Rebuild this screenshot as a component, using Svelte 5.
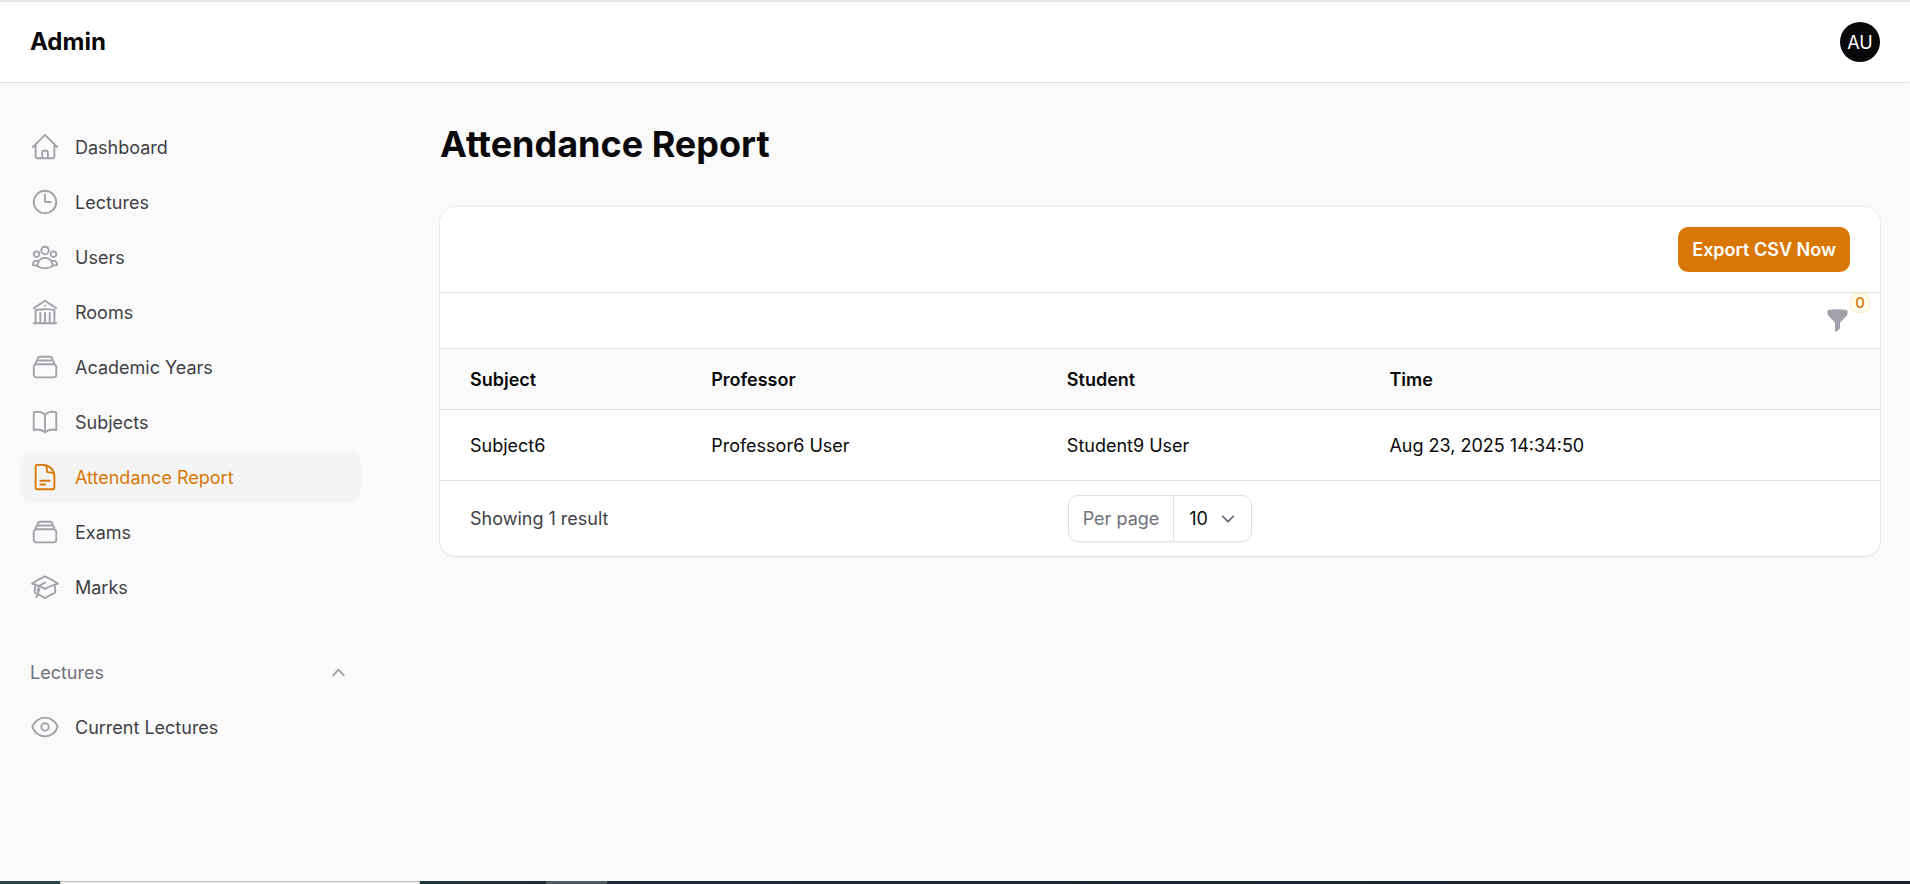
<script>
  const nav = [
    {
      label: "Dashboard",
      icon: "m2.25 12 8.954-8.955c.44-.439 1.152-.439 1.591 0L21.75 12M4.5 9.75v10.125c0 .621.504 1.125 1.125 1.125H9.75v-4.875c0-.621.504-1.125 1.125-1.125h2.25c.621 0 1.125.504 1.125 1.125V21h4.125c.621 0 1.125-.504 1.125-1.125V9.75M8.25 21h8.25",
    },
    {
      label: "Lectures",
      icon: "M12 6v6h4.5m4.5 0a9 9 0 1 1-18 0 9 9 0 0 1 18 0Z",
    },
    {
      label: "Users",
      icon: "M18 18.72a9.094 9.094 0 0 0 3.741-.479 3 3 0 0 0-4.682-2.72m.94 3.198.001.031c0 .225-.012.447-.037.666A11.944 11.944 0 0 1 12 21c-2.17 0-4.207-.576-5.963-1.584A6.062 6.062 0 0 1 6 18.719m12 0a5.971 5.971 0 0 0-.941-3.197m0 0A5.995 5.995 0 0 0 12 12.75a5.995 5.995 0 0 0-5.058 2.772m0 0a3 3 0 0 0-4.681 2.72 8.986 8.986 0 0 0 3.74.477m.94-3.197a5.971 5.971 0 0 0-.94 3.197M15 6.75a3 3 0 1 1-6 0 3 3 0 0 1 6 0Zm6 3a2.25 2.25 0 1 1-4.5 0 2.25 2.25 0 0 1 4.5 0Zm-13.5 0a2.25 2.25 0 1 1-4.5 0 2.25 2.25 0 0 1 4.5 0Z",
    },
    {
      label: "Rooms",
      icon: "M12 21v-8.25M15.75 21v-8.25M8.25 21v-8.25M3 9l9-6 9 6m-1.5 12V10.332A48.36 48.36 0 0 0 12 9.75c-2.551 0-5.056.2-7.5.582V21M3 21h18M12 6.75h.008v.008H12V6.75Z",
    },
    {
      label: "Academic Years",
      icon: "M6 6.878V6a2.25 2.25 0 0 1 2.25-2.25h7.5A2.25 2.25 0 0 1 18 6v.878m-12 0c.235-.083.487-.128.75-.128h10.5c.263 0 .515.045.75.128m-12 0A2.25 2.25 0 0 0 4.5 9v.878m13.5-3A2.25 2.25 0 0 1 19.5 9v.878m0 0a2.246 2.246 0 0 0-.75-.128H5.25c-.263 0-.515.045-.75.128m15 0A2.25 2.25 0 0 1 21 12v6a2.25 2.25 0 0 1-2.25 2.25H5.25A2.25 2.25 0 0 1 3 18v-6c0-.98.626-1.813 1.5-2.122",
    },
    {
      label: "Subjects",
      icon: "M12 6.042A8.967 8.967 0 0 0 6 3.75c-1.052 0-2.062.18-3 .512v14.25A8.987 8.987 0 0 1 6 18c2.305 0 4.408.867 6 2.292m0-14.25a8.966 8.966 0 0 1 6-2.292c1.052 0 2.062.18 3 .512v14.25A8.987 8.987 0 0 0 18 18a8.967 8.967 0 0 0-6 2.292m0-14.25v14.25",
    },
    {
      label: "Attendance Report",
      active: true,
      icon: "M19.5 14.25v-2.625a3.375 3.375 0 0 0-3.375-3.375h-1.5A1.125 1.125 0 0 1 13.5 7.125v-1.5a3.375 3.375 0 0 0-3.375-3.375H8.25m0 12.75h7.5m-7.5 3H12M10.5 2.25H5.625c-.621 0-1.125.504-1.125 1.125v17.25c0 .621.504 1.125 1.125 1.125h12.75c.621 0 1.125-.504 1.125-1.125V11.25a9 9 0 0 0-9-9Z",
    },
    {
      label: "Exams",
      icon: "M6 6.878V6a2.25 2.25 0 0 1 2.25-2.25h7.5A2.25 2.25 0 0 1 18 6v.878m-12 0c.235-.083.487-.128.75-.128h10.5c.263 0 .515.045.75.128m-12 0A2.25 2.25 0 0 0 4.5 9v.878m13.5-3A2.25 2.25 0 0 1 19.5 9v.878m0 0a2.246 2.246 0 0 0-.75-.128H5.25c-.263 0-.515.045-.75.128m15 0A2.25 2.25 0 0 1 21 12v6a2.25 2.25 0 0 1-2.25 2.25H5.25A2.25 2.25 0 0 1 3 18v-6c0-.98.626-1.813 1.5-2.122",
    },
    {
      label: "Marks",
      icon: "M4.26 10.147a60.438 60.438 0 0 0-.491 6.347A48.62 48.62 0 0 1 12 20.904a48.62 48.62 0 0 1 8.232-4.41 60.46 60.46 0 0 0-.491-6.347m-15.482 0a50.636 50.636 0 0 0-2.658-.813A59.906 59.906 0 0 1 12 3.493a59.903 59.903 0 0 1 10.399 5.84c-.896.248-1.783.52-2.658.814m-15.482 0A50.717 50.717 0 0 1 12 13.489a50.702 50.702 0 0 1 7.74-3.342M6.75 15a.75.75 0 1 0 0-1.5.75.75 0 0 0 0 1.5Zm0 0v-3.675A55.378 55.378 0 0 1 12 8.443m-7.007 11.55A5.981 5.981 0 0 0 6.75 15.75v-1.5",
    },
  ];

  const lectureNav = [
    {
      label: "Current Lectures",
      icon: "M2.036 12.322a1.012 1.012 0 0 1 0-.639C3.423 7.51 7.36 4.5 12 4.5c4.638 0 8.573 3.007 9.963 7.178.07.207.07.431 0 .639C20.577 16.49 16.64 19.5 12 19.5c-4.638 0-8.573-3.007-9.963-7.178ZM15 12a3 3 0 1 1-6 0 3 3 0 0 1 6 0Z",
    },
  ];

  const rows = [
    {
      subject: "Subject6",
      professor: "Professor6 User",
      student: "Student9 User",
      time: "Aug 23, 2025 14:34:50",
    },
  ];

  let open = $state(true);
  let perPage = $state("10");
</script>

{#snippet navItem(item)}
  <li>
    <a href="#top" class="item" class:active={item.active}>
      <svg class="icon" viewBox="0 0 24 24" aria-hidden="true">
        <path d={item.icon} />
      </svg>
      <span>{item.label}</span>
    </a>
  </li>
{/snippet}

<div class="page" id="top">
  <header class="topbar">
    <a href="#top" class="brand">Admin</a>
    <button class="avatar" aria-label="User menu">AU</button>
  </header>

  <div class="body">
    <nav class="sidebar">
      <ul>
        {#each nav as item}
          {@render navItem(item)}
        {/each}
      </ul>

      <div class="group">
        <button
          class="group-button"
          aria-expanded={open}
          onclick={() => (open = !open)}
        >
          <span>Lectures</span>
          <svg class:closed={!open} viewBox="0 0 20 20" aria-hidden="true">
            <path
              d="M14.77 12.79a.75.75 0 0 1-1.06-.02L10 8.832 6.29 12.77a.75.75 0 1 1-1.08-1.04l4.25-4.5a.75.75 0 0 1 1.08 0l4.25 4.5a.75.75 0 0 1-.02 1.06Z"
            />
          </svg>
        </button>
        {#if open}
          <ul>
            {#each lectureNav as item}
              {@render navItem(item)}
            {/each}
          </ul>
        {/if}
      </div>
    </nav>

    <main>
      <h1>Attendance Report</h1>

      <section class="card">
        <div class="actions">
          <button class="export">Export CSV Now</button>
        </div>

        <div class="toolbar">
          <button class="filter" aria-label="Filter">
            <svg viewBox="0 0 20 20" aria-hidden="true">
              <path
                d="M2.628 1.601C5.028 1.206 7.49 1 10 1s4.973.206 7.372.601a.75.75 0 0 1 .628.74v2.288a2.25 2.25 0 0 1-.659 1.59l-4.682 4.683a2.25 2.25 0 0 0-.659 1.59v3.037c0 .684-.31 1.33-.844 1.757l-1.937 1.55A.75.75 0 0 1 8 18.25v-5.757a2.25 2.25 0 0 0-.659-1.591L2.659 6.22A2.25 2.25 0 0 1 2 4.629V2.34a.75.75 0 0 1 .628-.74Z"
              />
            </svg>
            <span class="badge">0</span>
          </button>
        </div>

        <table>
          <colgroup>
            <col class="col-subject" />
            <col class="col-professor" />
            <col class="col-student" />
            <col />
          </colgroup>
          <thead>
            <tr>
              <th>Subject</th>
              <th>Professor</th>
              <th>Student</th>
              <th>Time</th>
            </tr>
          </thead>
          <tbody>
            {#each rows as row}
              <tr>
                <td>{row.subject}</td>
                <td>{row.professor}</td>
                <td>{row.student}</td>
                <td>{row.time}</td>
              </tr>
            {/each}
          </tbody>
        </table>

        <div class="pagination">
          <span class="count">Showing {rows.length} result</span>
          <div class="per-page">
            <label for="per-page">Per page</label>
            <div class="select">
              <select id="per-page" bind:value={perPage}>
                <option>5</option>
                <option>10</option>
                <option>25</option>
                <option>50</option>
              </select>
              <svg viewBox="0 0 20 20" aria-hidden="true">
                <path d="m6 8 4 4 4-4" />
              </svg>
            </div>
          </div>
        </div>
      </section>
    </main>
  </div>

  <div class="taskbar" aria-hidden="true">
    <div class="start"></div>
    <div class="search"></div>
    <div class="apps"></div>
    <div class="current"></div>
    <div class="rest"></div>
  </div>
</div>

<style>
  :global(body) {
    background: #fafafa;
  }
  .page {
    min-height: 100vh;
    display: flex;
    flex-direction: column;
    box-sizing: border-box;
    font-family: Inter, "Liberation Sans", sans-serif;
    font-size: 18px;
    line-height: 25px;
    color: #09090b;
  }
  button,
  select {
    font: inherit;
    color: inherit;
    border: 0;
    padding: 0;
    background: none;
    cursor: pointer;
  }
  a {
    color: inherit;
    text-decoration: none;
  }
  ul {
    list-style: none;
    margin: 0;
    padding: 0;
    display: flex;
    flex-direction: column;
    gap: 5px;
  }

  .topbar {
    display: flex;
    align-items: center;
    justify-content: space-between;
    height: 80px;
    margin-top: 1px;
    padding: 0 30px;
    background: white;
    border-top: 1px solid #e6dfe9;
    box-shadow:
      0 0 0 1px rgba(9, 9, 11, 0.05),
      0 1px 2px rgba(0, 0, 0, 0.06);
  }
  .brand {
    font-size: 24px;
    font-weight: 700;
    line-height: 30px;
  }
  .avatar {
    width: 40px;
    height: 40px;
    border-radius: 50%;
    background: #09090b;
    color: white;
  }

  .body {
    flex: 1;
    display: flex;
  }
  .sidebar {
    width: 341px;
    flex: none;
    padding: 40px 39px 40px 20px;
    display: flex;
    flex-direction: column;
    gap: 35px;
  }
  .item {
    display: flex;
    align-items: center;
    gap: 15px;
    padding: 10px;
    height: 30px;
    border-radius: 10px;
    color: #3f3f46;
  }
  .icon {
    width: 30px;
    height: 30px;
    fill: none;
    stroke: #a1a1aa;
    stroke-width: 1.5;
    stroke-linecap: round;
    stroke-linejoin: round;
  }
  .item.active {
    background: #f4f4f5;
    color: #d97706;
  }
  .active .icon {
    stroke: #d97706;
  }
  .group {
    display: flex;
    flex-direction: column;
    gap: 5px;
  }
  .group-button {
    display: flex;
    align-items: center;
    justify-content: space-between;
    height: 50px;
    padding: 0 10px;
    color: #71717a;
  }
  .group-button svg {
    width: 25px;
    height: 25px;
    fill: #a1a1aa;
  }
  .closed {
    transform: rotate(180deg);
  }

  main {
    flex: 1;
    min-width: 0;
    padding: 40px 30px 40px 40px;
  }
  h1 {
    margin: 0 0 40px;
    font-size: 36px;
    font-weight: 700;
    line-height: 45px;
  }
  .card {
    background: white;
    border-radius: 15px;
    box-shadow:
      0 0 0 1px rgba(9, 9, 11, 0.05),
      0 1px 2px rgba(0, 0, 0, 0.06);
    overflow: hidden;
  }
  .actions {
    display: flex;
    justify-content: flex-end;
    padding: 20px 30px;
    border-bottom: 1px solid #e4e4e7;
  }
  .export {
    height: 45px;
    padding: 0 14px;
    border-radius: 10px;
    background: #d97706;
    color: white;
    font-weight: 600;
  }
  .toolbar {
    display: flex;
    justify-content: flex-end;
    padding: 15px 30px;
    border-bottom: 1px solid #e4e4e7;
  }
  .filter {
    position: relative;
    width: 25px;
    height: 25px;
  }
  .filter svg {
    display: block;
    fill: #a1a1aa;
  }
  .badge {
    position: absolute;
    left: 100%;
    bottom: 80%;
    width: 20px;
    height: 20px;
    border-radius: 7px;
    background: #fffbeb;
    box-shadow: inset 0 0 0 1px rgba(217, 119, 6, 0.12);
    color: #d97706;
    font-size: 15px;
    font-weight: 500;
    line-height: 20px;
    text-align: center;
  }

  table {
    width: 100%;
    table-layout: fixed;
    border-collapse: separate;
    border-spacing: 0;
    text-align: left;
  }
  .col-subject {
    width: 16.75%;
  }
  .col-professor {
    width: 24.7%;
  }
  .col-student {
    width: 22.4%;
  }
  th,
  td {
    padding: 0 30px;
    border-bottom: 1px solid #e4e4e7;
  }
  th {
    height: 60px;
    background: #fafafa;
    font-weight: 600;
  }
  td {
    height: 70px;
  }

  .pagination {
    display: grid;
    grid-template-columns: 1fr auto 1fr;
    align-items: center;
    padding: 14px 30px;
  }
  .count {
    color: #3f3f46;
  }
  .per-page {
    display: flex;
    align-items: center;
    border: 1px solid #e0e0e2;
    border-radius: 10px;
    box-shadow: 0 1px 2px rgba(0, 0, 0, 0.05);
  }
  .per-page label {
    padding: 0 14px;
    color: #71717a;
  }
  .select {
    display: flex;
    align-items: center;
    border-left: 1px solid #e4e4e7;
  }
  .select select {
    appearance: none;
    height: 45px;
    width: 77px;
    padding: 0 0 0 15px;
  }
  .select svg {
    width: 26px;
    height: 26px;
    margin-left: -36px;
    margin-right: 10px;
    pointer-events: none;
    fill: none;
    stroke: #6b7280;
    stroke-width: 1.5;
    stroke-linecap: round;
    stroke-linejoin: round;
  }

  .taskbar {
    display: flex;
    height: 3px;
  }
  .start {
    width: 60px;
    background: #294347;
  }
  .search {
    width: 360px;
    box-sizing: border-box;
    background: #f2f2f2;
    border: 1px solid #bdbdbd;
    border-bottom: 0;
  }
  .apps {
    width: 126px;
    background: linear-gradient(90deg, #20373f, #1f2d3c);
  }
  .current {
    width: 61px;
    background: #4f5a69;
  }
  .rest {
    flex: 1;
    background: linear-gradient(90deg, #1e283b, #1b1f31);
  }
</style>
